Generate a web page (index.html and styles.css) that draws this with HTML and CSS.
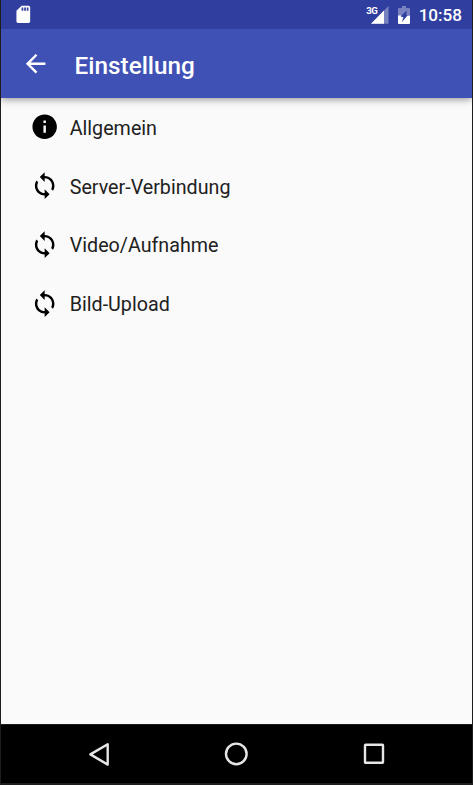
FILE: index.html
```html
<!DOCTYPE html>
<html lang="de">
<head>
<meta charset="utf-8">
<title>Einstellung</title>
<link rel="stylesheet" href="styles.css">
</head>
<body>
<svg width="0" height="0" class="defs"><defs>
<symbol id="sync" viewBox="0 0 24 24"><path d="M12 4V1L8 5l4 4V6c3.31 0 6 2.69 6 6 0 1.01-.25 1.97-.7 2.8l1.46 1.46C19.54 15.03 20 13.57 20 12c0-4.42-3.58-8-8-8zm0 14c-3.31 0-6-2.69-6-6 0-1.01.25-1.97.7-2.8L5.24 7.74C4.46 8.97 4 10.43 4 12c0 4.42 3.58 8 8 8v3l4-4-4-4v3z"/></symbol>
</defs></svg>
<div class="device">
  <header class="status">
    <svg class="sd" viewBox="0 0 24 24"><path fill="#fff" d="M18 2h-8L4.020 8 4 20c0 1.100.9 2 2 2h12c1.100 0 2-.9 2-2V4c0-1.100-.9-2-2-2zm-6 6h-2V4h2v4zm3 0h-2V4h2v4zm3 0h-2V4h2v4z"/></svg>
    <div class="status-right">
      <div class="signal">
        <svg viewBox="0 0 18 18"><path fill="#fff" fill-opacity=".35" d="M17.500 0v17.800H0z"/><path fill="#fff" d="M13 4.600v13.200H0z"/></svg>
        <span class="network">3G</span>
      </div>
      <svg class="battery" viewBox="0 0 12 18"><path fill="#fff" fill-opacity=".35" d="M4 0h4v2h3q1 0 1 1v6H8.300L8.700 4.500 3 10H0V3q0-1 1-1h3z"/><path fill="#fff" d="M0 9.500h3.200v1.500h2.200L4 16l5.500-6.500H12V17q0 1-1 1H1q-1 0-1-1z"/></svg>
      <span class="time">10:58</span>
    </div>
  </header>
  <div class="toolbar">
    <svg class="icon" viewBox="0 0 24 24"><path fill="#fff" d="M20 11H7.830l5.590-5.590L12 4l-8 8 8 8 1.410-1.410L7.830 13H20v-2z"/></svg>
    <h1 class="title">Einstellung</h1>
  </div>
  <main class="list">
    <div class="row"><svg class="icon" viewBox="0 0 24 24"><path d="M12 2C6.480 2 2 6.480 2 12s4.480 10 10 10 10-4.480 10-10S17.520 2 12 2zm1 15h-2v-6h2v6zm0-8h-2V7h2v2z"/></svg><span>Allgemein</span></div>
    <div class="row"><svg class="icon"><use href="#sync"/></svg><span>Server-Verbindung</span></div>
    <div class="row"><svg class="icon"><use href="#sync"/></svg><span>Video/Aufnahme</span></div>
    <div class="row"><svg class="icon"><use href="#sync"/></svg><span>Bild-Upload</span></div>
  </main>
  <nav class="nav">
    <svg viewBox="0 0 26 26"><path d="M21.700 3.200v20.400L4.400 13.400z"/></svg>
    <svg viewBox="0 0 26 26"><circle cx="13.300" cy="12.900" r="10.300"/></svg>
    <svg viewBox="0 0 26 26"><rect x="4" y="3.800" width="18" height="18" rx=".6"/></svg>
  </nav>
</div>
</body>
</html>
```
FILE: styles.css
```css
* { box-sizing: border-box; }
body {
  margin: 0;
  background: #1d1d1d;
  font-family: Roboto, sans-serif;
}
.defs { display: none; }
.device {
  height: 785px;
  padding: 0 1px 2px;
  display: flex;
  flex-direction: column;
}
.status {
  height: 29px;
  flex: none;
  background: #303f9f;
  padding: 0 10px 0 11.500px;
  display: flex;
  align-items: center;
  justify-content: space-between;
  color: #fff;
}
.sd { width: 20.600px; height: 20.600px; }
.status-right { display: flex; align-items: center; }
.signal { position: relative; width: 18px; height: 18px; margin-right: 9px; }
.signal svg { display: block; width: 18px; height: 18px; }
.network {
  position: absolute;
  left: -4.500px;
  top: -1px;
  font-size: 9.600px;
  line-height: 12px;
  font-weight: 700;
  letter-spacing: -.3px;
}
.battery { width: 12px; height: 18px; margin-right: 9px; }
.time { font-size: 17.100px; font-weight: 500; line-height: 20px; padding-top: 1px; }
.toolbar {
  height: 69px;
  flex: none;
  background: #3f51b5;
  color: #fff;
  display: flex;
  align-items: center;
  padding-left: 19.700px;
  box-shadow: 0 1px 8px rgba(0, 0, 0, .45);
  clip-path: inset(0 0 -16px 0);
  z-index: 1;
}
.icon { width: 29.340px; height: 29.340px; flex: none; }
.title {
  margin: 3px 0 0 24.600px;
  font-size: 24.300px;
  line-height: 29px;
  font-weight: 500;
}
.list { flex: 1; background: #fafafa; }
.row {
  height: 58.700px;
  padding-left: 29.450px;
  display: flex;
  align-items: center;
  font-size: 19.700px;
  line-height: 24px;
  color: #212121;
}
.row .icon { color: #000; margin-top: -1px; }
.row + .row .icon { margin-top: 0; }
.row span { margin: 3px 0 0 9.950px; }
.nav {
  height: 59px;
  flex: none;
  background: #000;
  border-top: 1px solid #1d1d1d;
  display: flex;
  align-items: center;
  justify-content: center;
  gap: 111.500px;
  padding: 0 1px 1px 0;
}
.nav svg { width: 26px; height: 26px; fill: none; stroke: #e6e6e6; stroke-width: 2.400; stroke-linejoin: round; }
```
